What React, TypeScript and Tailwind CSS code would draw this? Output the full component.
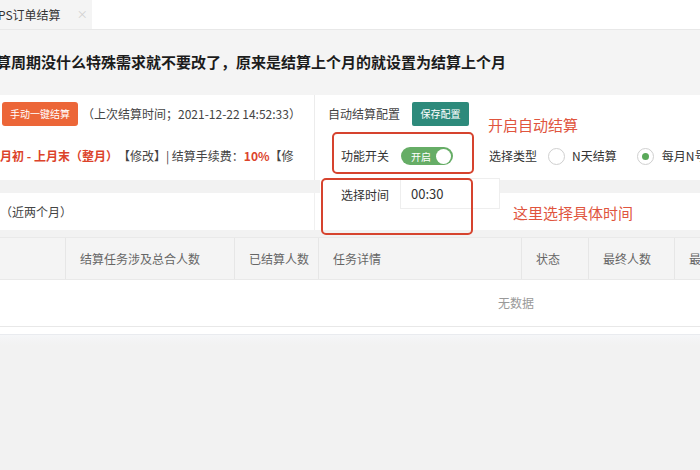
import React from "react";

const Radio = ({ checked }: { checked?: boolean }) => (
  <span className="w-[17px] h-[17px] rounded-full border border-[#cfcfcf] bg-white flex items-center justify-center">
    {checked && <span className="w-[7px] h-[7px] rounded-full bg-[#5aa95a]" />}
  </span>
);

export default function App() {
  const cols = [
    { w: "w-[66px]", t: "" },
    { w: "w-[169px]", t: "结算任务涉及总合人数" },
    { w: "w-[84px]", t: "已结算人数" },
    { w: "w-[203px]", t: "任务详情" },
    { w: "w-[67px]", t: "状态" },
    { w: "w-[86px]", t: "最终人数" },
    { w: "w-[60px]", t: "最" },
  ];
  return (
    <div className="relative w-[700px] h-[470px] overflow-hidden bg-[#f2f2f2] font-['Noto_Sans_CJK_SC','Noto_Sans',sans-serif] text-[12px] text-[#444]">
      {/* tab bar */}
      <div className="h-[30px] bg-white border-b border-[#e8e8e8] flex">
        <div className="w-[92px] bg-[#f4f4f4] flex items-center">
          <span className="ml-[-2px] text-[12px] text-[#333] whitespace-nowrap">PS订单结算</span>
          <span className="ml-[16px] text-[11px] text-[#cfcfcf]">×</span>
        </div>
      </div>

      {/* title */}
      <div className="h-[65px] bg-[#f4f4f4] flex items-center overflow-hidden">
        <span className="ml-[-4px] text-[15px] font-bold text-[#1c1c1c] whitespace-nowrap">
          算周期没什么特殊需求就不要改了，原来是结算上个月的就设置为结算上个月
        </span>
      </div>

      {/* config panel */}
      <div className="h-[85px] bg-white flex">
        <div className="w-[315px] shrink-0 border-r border-[#ececec] flex flex-col">
          <div className="h-[37px] flex items-center whitespace-nowrap">
            <span className="ml-[2px] w-[76px] h-[24px] rounded-[3px] bg-[#ec6638] text-white text-[10px] flex items-center justify-center">
              手动一键结算
            </span>
            <span className="ml-[4px] text-[#444]">（上次结算时间；2021-12-22 14:52:33）</span>
          </div>
          <div className="flex-1 flex items-center whitespace-nowrap">
            <span className="text-[#dc432b] font-bold">月初 - 上月末（整月）</span>
            <span className="text-[#444]">【修改】| 结算手续费：</span>
            <span className="text-[#dc432b] font-bold">10%</span>
            <span className="text-[#444]">【修</span>
          </div>
        </div>
        <div className="flex-1 min-w-0 flex flex-col pl-[13px] whitespace-nowrap">
          <div className="h-[37px] flex items-center">
            <span className="text-[#444]">自动结算配置</span>
            <span className="ml-[12px] w-[57px] h-[24px] rounded-[2px] bg-[#2d8a7b] text-white text-[10px] flex items-center justify-center">
              保存配置
            </span>
          </div>
          <div className="flex-1 flex items-center">
            <span className="ml-[13px] text-[#333]">功能开关</span>
            <span className="ml-[12px] w-[52px] h-[18px] shrink-0 rounded-full bg-[#66ad66] flex items-center pl-[10px] pr-[2px] justify-between">
              <span className="text-white text-[10px]">开启</span>
              <span className="w-[15px] h-[15px] rounded-full bg-white" />
            </span>
            <span className="ml-[36px] text-[#333]">选择类型</span>
            <span className="ml-[11px] shrink-0"><Radio /></span>
            <span className="ml-[7px] text-[#333]">N天结算</span>
            <span className="ml-[20px] shrink-0"><Radio checked /></span>
            <span className="ml-[8px] text-[#333]">每月N号</span>
          </div>
        </div>
      </div>

      <div className="h-[13px]" />

      {/* range row */}
      <div className="h-[37px] bg-white flex">
        <div className="w-[315px] shrink-0 border-r border-[#f0f0f0] flex items-center">
          <span className="text-[#444]">（近两个月）</span>
        </div>
      </div>

      <div className="h-[7px]" />

      {/* table header */}
      <div className="h-[43px] bg-[#f4f4f4] border-y border-[#e9e9e9] flex">
        {cols.map((c, i) => (
          <div
            key={i}
            className={`${c.w} shrink-0 border-r border-[#e6e6e6] flex items-center pl-[14px] text-[#666] whitespace-nowrap`}
          >
            {c.t}
          </div>
        ))}
      </div>

      {/* body */}
      <div className="h-[47px] bg-white border-b border-[#e8e8e8] flex items-center">
        <span className="ml-[498px] text-[#999]">无数据</span>
      </div>
      <div className="h-[8px] bg-white border-b border-[#e9ebef]" />
      <div className="h-[10px] bg-gradient-to-b from-[#f5f6f8] to-[#f2f2f2]" />

      {/* select time popup */}
      <div className="absolute left-[320px] top-[178px] w-[180px] h-[32px] bg-white flex items-start">
        <span className="ml-[21px] mt-[8px] text-[#333]">选择时间</span>
        <span className="ml-[11px] w-[100px] h-[31px] border border-[#eeeeee] bg-white flex items-center pl-[10px] text-[13px] text-[#333]">
          00:30
        </span>
      </div>

      {/* annotations */}
      <div className="absolute left-[332px] top-[132px] w-[142px] h-[42px] border-2 border-[#d6432e] rounded-[5px]" />
      <div className="absolute left-[321px] top-[178px] w-[152px] h-[57px] border-2 border-[#d6432e] rounded-[5px]" />
      <div className="absolute left-[488px] top-[114px] text-[15px] text-[#e0553e] whitespace-nowrap">开启自动结算</div>
      <div className="absolute left-[513px] top-[202px] text-[15px] text-[#e0553e] whitespace-nowrap">这里选择具体时间</div>
    </div>
  );
}
